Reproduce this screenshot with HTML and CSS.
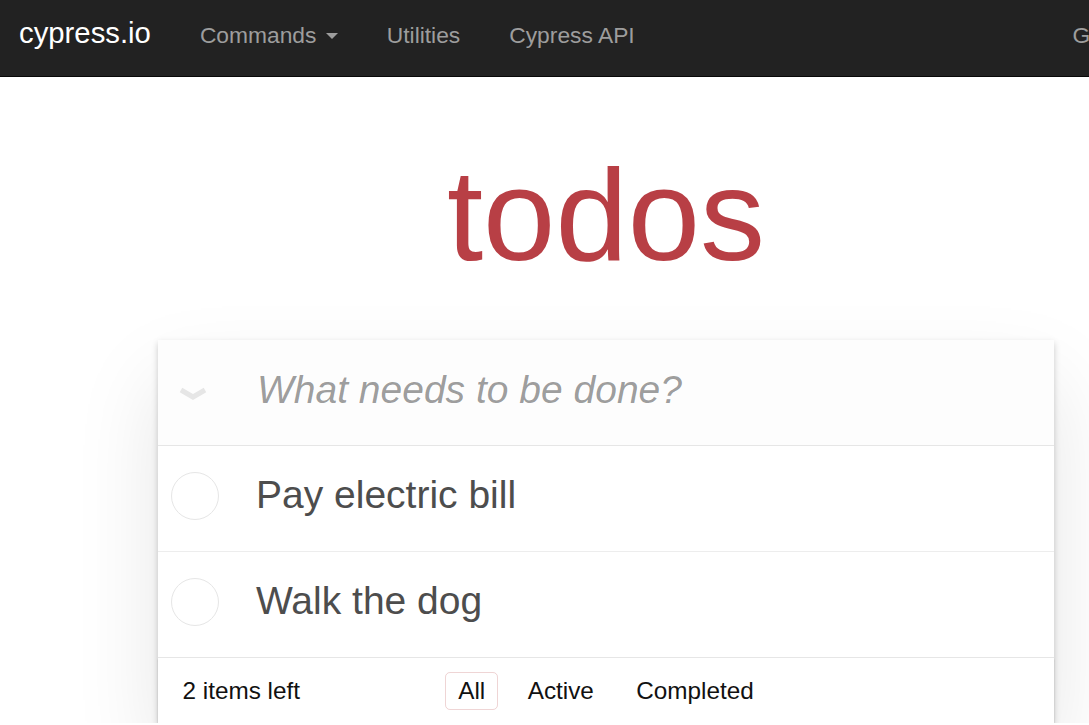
FILE: index.html
```html
<!DOCTYPE html>
<html lang="en">
<head>
    <meta charset="UTF-8">
    <meta name="viewport" content="width=device-width, initial-scale=1.0">
    <title>Kitchen Sink - todos</title>
    <link rel="stylesheet" href="styles.css">
</head>
<body>
    <nav class="navbar">
        <a class="brand" href="#">cypress.io</a>
        <ul class="nav">
            <li><a href="#">Commands <span class="caret"></span></a></li>
            <li><a href="#">Utilities</a></li>
            <li><a href="#">Cypress API</a></li>
        </ul>
        <ul class="nav nav-right">
            <li><a href="#">GitHub</a></li>
        </ul>
    </nav>

    <h1 class="title">todos</h1>

    <section class="todoapp">
        <header class="header">
            <label class="toggle-all" for="toggleAll">
                <svg width="30" height="16" viewBox="0 0 30 16">
                    <polyline points="3,4 15,11 27,4" fill="none" stroke="#e6e6e6" stroke-width="5" />
                </svg>
            </label>
            <input id="toggleAll" class="toggle-all-box" type="checkbox">
            <input class="new-todo" placeholder="What needs to be done?">
        </header>

        <!-- Todo list -->
        <section class="main">
            <ul class="todo-list">
                <li>
                    <input class="toggle" type="checkbox">
                    <label>Pay electric bill</label>
                </li>
                <li>
                    <input class="toggle" type="checkbox">
                    <label>Walk the dog</label>
                </li>
            </ul>
        </section>

        <footer class="footer">
            <span class="todo-count">2 items left</span>
            <ul class="filters">
                <li><a class="selected" href="#/">All</a></li>
                <li><a href="#/active">Active</a></li>
                <li><a href="#/completed">Completed</a></li>
            </ul>
            <span></span>
        </footer>
    </section>
</body>
</html>
```

FILE: styles.css
```css
html {
    overflow: hidden;
}
body {
    margin: 0;
    width: 1212px;
    font-family: 'Liberation Sans', Arial, sans-serif;
    background-color: #fff;
    color: #111;
}
ul {
    list-style: none;
    margin: 0;
    padding: 0;
}

/* Top navbar */
.navbar {
    display: flex;
    align-items: baseline;
    box-sizing: border-box;
    height: 77px;
    padding-top: 16px;
    background-color: #222;
    border-bottom: 1px solid #080808;
}
.brand {
    padding: 0 24.5px 0 19px;
    font-size: 29.3px;
    line-height: 33px;
    color: #fff;
    text-decoration: none;
}
.nav {
    display: flex;
    align-items: baseline;
}
.nav a {
    display: block;
    padding: 0 24.5px;
    font-size: 22.8px;
    line-height: 33px;
    color: #9d9d9d;
    text-decoration: none;
}
.nav-right {
    margin-left: auto;
    margin-right: 44px;
}
.caret {
    display: inline-block;
    width: 0;
    height: 0;
    margin-left: 3px;
    vertical-align: 4px;
    border-top: 6.5px solid #9d9d9d;
    border-left: 6.5px solid transparent;
    border-right: 6.5px solid transparent;
}

/* Title */
.title {
    margin: 73px 0 0;
    font-size: 130px;
    line-height: 130px;
    font-weight: normal;
    text-align: center;
    color: #b83f45;
}

/* Todo app card */
.todoapp {
    position: relative;
    width: 896px;
    margin: 60px auto 0;
    background: #fff;
    box-shadow: 0 3px 6.5px 0 rgba(0, 0, 0, 0.2), 0 41px 81px 0 rgba(0, 0, 0, 0.1);
}
.header {
    display: flex;
    align-items: center;
    height: 105px;
    background-color: #fdfdfd;
}
.toggle-all {
    display: flex;
    justify-content: center;
    align-items: center;
    width: 69px;
    height: 105px;
    cursor: pointer;
}
.toggle-all svg {
    margin-top: 3px;
}
.toggle-all-box {
    display: none;
}
.new-todo {
    flex: 1;
    box-sizing: border-box;
    height: 105px;
    padding: 0 26px 6px 30px;
    border: none;
    outline: none;
    background: transparent;
    font-family: inherit;
    font-size: 39px;
    color: #4d4d4d;
}
.new-todo::placeholder {
    font-style: italic;
    color: rgba(0, 0, 0, 0.4);
}

.main {
    border-top: 1px solid #e6e6e6;
}
.todo-list li {
    display: flex;
    align-items: center;
    box-sizing: border-box;
    height: 106px;
    padding-bottom: 9px;
    border-bottom: 1px solid #ededed;
}
.todo-list li:last-child {
    height: 105px;
    border-bottom: none;
}
.toggle {
    appearance: none;
    -webkit-appearance: none;
    box-sizing: border-box;
    width: 48px;
    height: 48px;
    margin: 3px 0 0 13px;
    border: 1.5px solid #e6e6e6;
    border-radius: 50%;
    cursor: pointer;
}
.todo-list label {
    margin-left: 37px;
    font-size: 39px;
    line-height: 47px;
    color: #4d4d4d;
}

/* Footer */
.footer {
    position: relative;
    display: grid;
    grid-template-columns: 1fr auto 1fr;
    align-items: center;
    box-sizing: border-box;
    height: 66px;
    padding: 0 24.5px;
    border-top: 1px solid #e6e6e6;
    font-size: 24.3px;
    line-height: 26px;
}
.footer::before {
    content: '';
    position: absolute;
    right: 0;
    bottom: 0;
    left: 0;
    height: 66px;
    pointer-events: none;
    box-shadow: 0 1.6px 1.6px rgba(0, 0, 0, 0.2),
                0 13px 0 -5px #f6f6f6,
                0 14.7px 1.6px -5px rgba(0, 0, 0, 0.2),
                0 26px 0 -10px #f6f6f6,
                0 27.7px 3.3px -10px rgba(0, 0, 0, 0.2);
}
.filters {
    display: flex;
    gap: 16.4px;
}
.filters a {
    display: block;
    padding: 5px 12px;
    border: 1px solid transparent;
    border-radius: 5px;
    color: inherit;
    text-decoration: none;
}
.filters a.selected {
    border-color: rgba(175, 47, 47, 0.2);
}
```
